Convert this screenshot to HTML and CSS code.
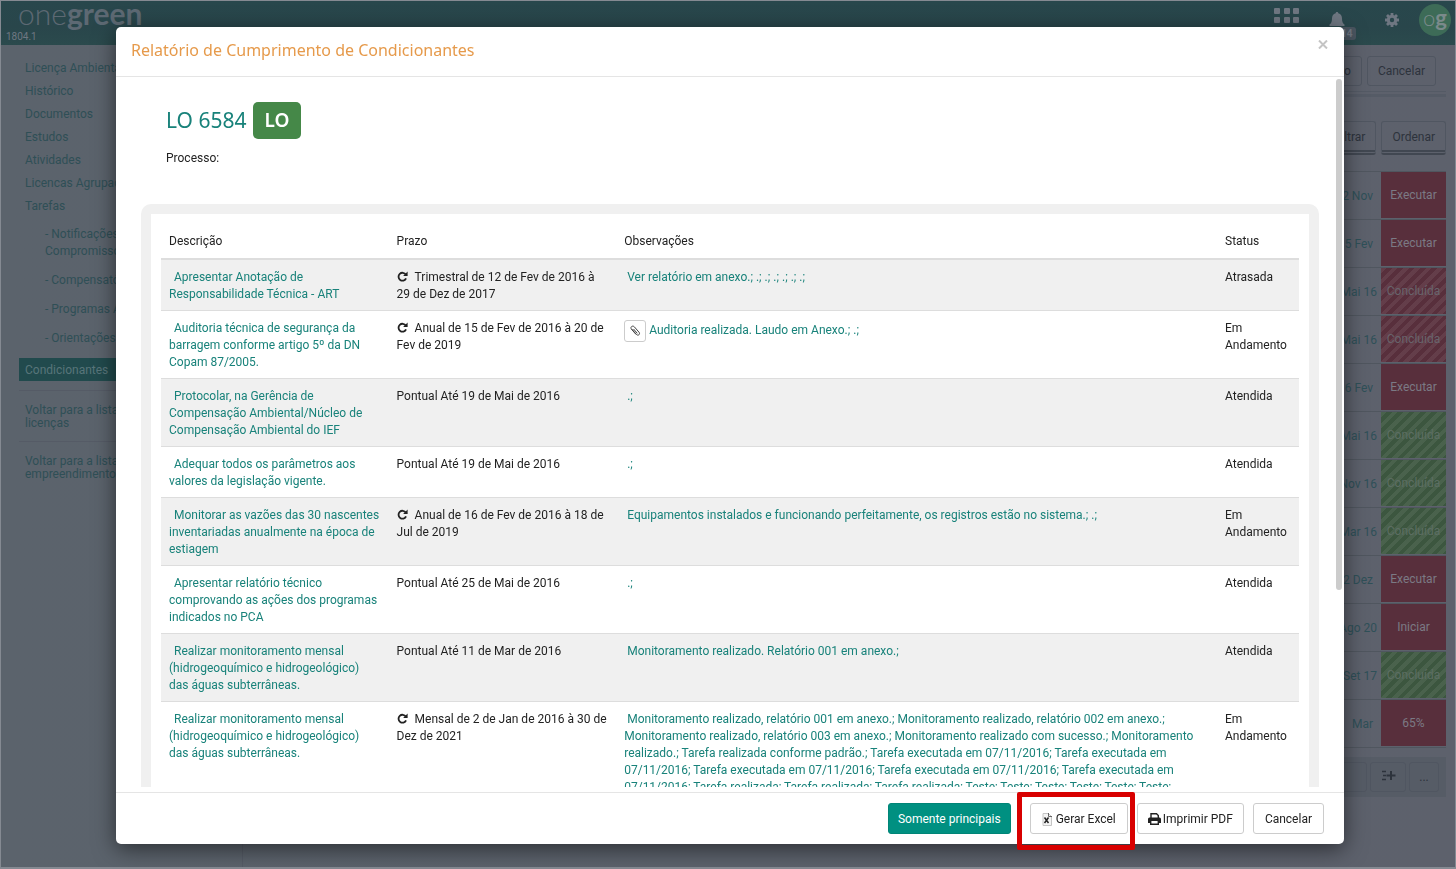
FILE: index.html
```html
<!DOCTYPE html>
<html lang="pt-BR">
<head>
<meta charset="utf-8">
<title>Onegreen - Condicionantes</title>
<link rel="stylesheet" href="styles.css">
</head>
<body>
<svg width="0" height="0" class="sprite" aria-hidden="true">
  <symbol id="repeat" viewBox="0 0 12 12"><path d="M9.6 3.9A4.3 4.3 0 1 0 9.9 8" fill="none" stroke="currentColor" stroke-width="2"/><path d="M11.6.6v4.900H6.700z" fill="currentColor"/></symbol>
</svg>
<div class="page">
  <header class="topbar">
    <div class="brand"><span class="logo"><span>one</span><b>green</b></span><span class="version">1804.1</span></div>
    <nav class="tools" aria-label="Ferramentas">
      <button class="tool apps" aria-label="Aplicativos"><svg width="26" height="26" viewBox="0 0 26 26" fill="currentColor"><rect width="6" height="6" rx="1"/><rect x="10" width="6" height="6" rx="1"/><rect x="19" width="6" height="6" rx="1"/><rect y="9" width="6" height="6" rx="1"/><rect x="10" y="9" width="6" height="6" rx="1"/><rect x="19" y="9" width="6" height="6" rx="1"/></svg></button>
      <button class="tool bell" aria-label="Notificações"><svg width="16" height="17" viewBox="0 0 16 17" fill="currentColor"><path d="M8 0c.8 0 1.300.5 1.300 1.300C12 2 13 4 13 6.500c0 3.500 1 5 2.500 6V14H.5v-1.500C2 11.500 3 10 3 6.500 3 4 4 2 6.700 1.300 6.700.5 7.200 0 8 0zM6 15h4a2 2 0 0 1-4 0z"/></svg><span class="count">14</span></button>
      <button class="tool gear" aria-label="Configurações"><svg width="14" height="14" viewBox="0 0 14 14"><circle cx="7" cy="7" r="3.700" fill="none" stroke="currentColor" stroke-width="3"/><path d="M7 0v3M7 11v3M0 7h3M11 7h3M2 2l2.200 2.200M9.800 9.800L12 12M12 2L9.800 4.200M4.200 9.800L2 12" stroke="currentColor" stroke-width="2.800"/></svg></button>
      <a class="avatar" href="#" aria-label="Perfil"><span>o</span><b>g</b></a>
    </nav>
  </header>
  <div class="columns">
    <nav class="sidebar" aria-label="Licença">
      <a href="#">Licença Ambiental</a>
      <a href="#">Histórico</a>
      <a href="#">Documentos</a>
      <a href="#">Estudos</a>
      <a href="#">Atividades</a>
      <a href="#">Licencas Agrupadas</a>
      <a href="#">Tarefas</a>
      <div class="sub">
        <a href="#">- Notificações e<br>Compromissos</a>
        <a href="#">- Compensatórias</a>
        <a href="#">- Programas Ambientais</a>
        <a href="#">- Orientações</a>
      </div>
      <a class="active" href="#">Condicionantes</a>
      <a class="back" href="#">Voltar para a lista de<br>licenças</a>
      <a class="back" href="#">Voltar para a lista de<br>empreendimentos</a>
    </nav>
    <main class="main">
      <div class="actions"><button class="ghost">Salvar e criar novo</button><button class="ghost">Cancelar</button></div>
      <div class="filters"><button class="ghost">Filtrar</button><button class="ghost">Ordenar</button></div>
      <ul class="tasks">
        <li><span class="date short">22 Nov</span><button class="state red">Executar</button></li>
        <li><span class="date short">15 Fev</span><button class="state red">Executar</button></li>
        <li><span class="date">19 Mai 16</span><button class="state red done">Concluída</button></li>
        <li><span class="date">19 Mai 16</span><button class="state red done">Concluída</button></li>
        <li><span class="date short">16 Fev</span><button class="state red">Executar</button></li>
        <li><span class="date">25 Mai 16</span><button class="state green done">Concluída</button></li>
        <li><span class="date">11 Nov 16</span><button class="state green done">Concluída</button></li>
        <li><span class="date">11 Mar 16</span><button class="state green done">Concluída</button></li>
        <li><span class="date short">2 Dez</span><button class="state red">Executar</button></li>
        <li><span class="date">1 Ago 20</span><button class="state red">Iniciar</button></li>
        <li><span class="date">1 Set 17</span><button class="state green done">Concluída</button></li>
        <li><span class="date short">Mar</span><button class="state red">65%</button></li>
      </ul>
      <div class="adder"><button class="ghost wide" aria-label="Nova tarefa"></button><button class="ghost list" aria-label="Adicionar à lista"><svg width="15" height="11" viewBox="0 0 15 11"><path d="M1 1.500h5M2 5.500h3M1 9.500h4" stroke="currentColor" stroke-width="1.500" stroke-dasharray="4 1"/><path d="M10 1v9M5.500 5.500h9" stroke="currentColor" stroke-width="2"/></svg></button><button class="ghost more">...</button></div>
    </main>
  </div>
</div>

<div class="overlay">
  <section class="modal" role="dialog" aria-modal="true" aria-labelledby="modal-title">
    <header class="modal-head"><h1 id="modal-title">Relatório de Cumprimento de Condicionantes</h1><button class="close" aria-label="Fechar"><svg width="10" height="9" viewBox="0 0 10 9"><path d="M1 .5l8 8M9 .5l-8 8" stroke="currentColor" stroke-width="2"/></svg></button></header>
    <div class="modal-body">
      <div class="scroll">
        <div class="license"><h2>LO 6584 <span class="badge">LO</span></h2><p>Processo:</p></div>
        <div class="panel">
          <table>
            <colgroup><col class="c-desc"><col class="c-term"><col class="c-obs"><col class="c-status"></colgroup>
            <thead><tr><th>Descrição</th><th>Prazo</th><th>Observações</th><th>Status</th></tr></thead>
            <tbody>
              <tr><td class="desc"><a href="#">Apresentar Anotação de<br>Responsabilidade Técnica - ART</a></td><td><svg class="repeat"><use href="#repeat"/></svg>Trimestral de 12 de Fev de 2016 à<br>29 de Dez de 2017</td><td class="obs"><a href="#">Ver relatório em anexo.; .; .; .; .; .; .;</a></td><td>Atrasada</td></tr>
              <tr><td class="desc"><a href="#">Auditoria técnica de segurança da<br>barragem conforme artigo 5º da DN<br>Copam 87/2005.</a></td><td><svg class="repeat"><use href="#repeat"/></svg>Anual de 15 de Fev de 2016 à 20 de<br>Fev de 2019</td><td><div class="attached"><button class="clip" aria-label="Anexo"><svg width="12" height="12" viewBox="0 0 12 12" fill="none" stroke="currentColor" stroke-linecap="round"><path d="M3.200 4.500l4.300 5c1.700 1.700 4-.3 2.600-2.200L5.300 1.800C3.600.1 1 1.900 2.300 4l4.500 5.200M4.800 4.300L8 8" stroke-width="1"/></svg></button><a href="#">Auditoria realizada. Laudo em Anexo.; .;</a></div></td><td>Em<br>Andamento</td></tr>
              <tr><td class="desc"><a href="#">Protocolar, na Gerência de<br>Compensação Ambiental/Núcleo de<br>Compensação Ambiental do IEF</a></td><td>Pontual Até 19 de Mai de 2016</td><td class="obs"><a href="#">.;</a></td><td>Atendida</td></tr>
              <tr><td class="desc"><a href="#">Adequar todos os parâmetros aos<br>valores da legislação vigente.</a></td><td>Pontual Até 19 de Mai de 2016</td><td class="obs"><a href="#">.;</a></td><td>Atendida</td></tr>
              <tr><td class="desc"><a href="#">Monitorar as vazões das 30 nascentes<br>inventariadas anualmente na época de<br>estiagem</a></td><td><svg class="repeat"><use href="#repeat"/></svg>Anual de 16 de Fev de 2016 à 18 de<br>Jul de 2019</td><td class="obs"><a href="#">Equipamentos instalados e funcionando perfeitamente, os registros estão no sistema.; .;</a></td><td>Em<br>Andamento</td></tr>
              <tr><td class="desc"><a href="#">Apresentar relatório técnico<br>comprovando as ações dos programas<br>indicados no PCA</a></td><td>Pontual Até 25 de Mai de 2016</td><td class="obs"><a href="#">.;</a></td><td>Atendida</td></tr>
              <tr><td class="desc"><a href="#">Realizar monitoramento mensal<br>(hidrogeoquímico e hidrogeológico)<br>das águas subterrâneas.</a></td><td>Pontual Até 11 de Mar de 2016</td><td class="obs"><a href="#">Monitoramento realizado. Relatório 001 em anexo.;</a></td><td>Atendida</td></tr>
              <tr><td class="desc"><a href="#">Realizar monitoramento mensal<br>(hidrogeoquímico e hidrogeológico)<br>das águas subterrâneas.</a></td><td><svg class="repeat"><use href="#repeat"/></svg>Mensal de 2 de Jan de 2016 à 30 de<br>Dez de 2021</td><td class="obs"><a href="#">Monitoramento realizado, relatório 001 em anexo.; Monitoramento realizado, relatório 002 em anexo.;<br>Monitoramento realizado, relatório 003 em anexo.; Monitoramento realizado com sucesso.; Monitoramento<br>realizado.; Tarefa realizada conforme padrão.; Tarefa executada em 07/11/2016; Tarefa executada em<br>07/11/2016; Tarefa executada em 07/11/2016; Tarefa executada em 07/11/2016; Tarefa executada em<br>07/11/2016; Tarefa realizada; Tarefa realizada; Tarefa realizada; Teste; Teste; Teste; Teste; Teste; Teste;</a></td><td>Em<br>Andamento</td></tr>
            </tbody>
          </table>
        </div>
      </div>
      <div class="thumb"></div>
    </div>
    <footer class="modal-foot">
      <button class="btn primary">Somente principais</button>
      <span class="highlight"><button class="btn excel"><svg width="10" height="13" viewBox="0 0 10 13"><path d="M1 .5h5.500l3 3v9H1z" fill="#f4f4f4" stroke="#c4c4c4"/><path d="M6.500 0v3.500H10" fill="none" stroke="#666"/><path d="M2.500 4.500l4 5.500M6.500 4.500l-4 5.500" stroke="#222" stroke-width="1.500"/></svg>Gerar Excel</button></span>
      <button class="btn print"><svg width="13" height="12" viewBox="0 0 13 12" fill="currentColor"><path d="M3 5V.7h5.500L10.300 2.500V5" fill="none" stroke="currentColor" stroke-width="1.400"/><path d="M1.500 4.500h10A1.500 1.500 0 0 1 13 6v4h-2V8H2v2H0V6a1.500 1.500 0 0 1 1.500-1.500z"/><path d="M2.700 8v3.300h7.600V8" fill="none" stroke="currentColor" stroke-width="1.400"/></svg>Imprimir PDF</button>
      <button class="btn">Cancelar</button>
    </footer>
  </section>
</div>
</body>
</html>
```

FILE: styles.css
```css
* { box-sizing: border-box; }
html, body { margin: 0; height: 100%; }
body { font: 12px/17px Roboto, "Open Sans", sans-serif; color: #222; overflow: hidden; }
button { font: inherit; color: inherit; cursor: pointer; }
a { color: #18827a; text-decoration: none; }
.sprite { position: absolute; }

/* Page behind the dialog */
.page { display: flex; flex-direction: column; height: 100vh; overflow: hidden; border: 1px solid #858a92; border-bottom-width: 2px; background: linear-gradient(90deg, #5b636c, #5d616c); }
.topbar { display: flex; justify-content: space-between; flex: none; height: 44px; background: linear-gradient(#28474c, #29464b 60%, #2b4a4d); color: #6f7782; }
.brand { display: flex; flex-direction: column; padding-left: 5px; }
.logo { height: 31px; padding-left: 12px; font: 300 30px/24px Lato, sans-serif; color: #5d6973; }
.logo b { font-weight: 700; }
.version { font-size: 10px; line-height: 16px; }
.tools { display: flex; align-items: flex-start; padding: 3px 4px 0 0; }
.tool { position: relative; border: 0; padding: 0; background: none; line-height: 0; }
.apps { margin: 4px 29px 0 0; }
.bell { margin: 8px 40px 0 0; }
.gear { margin: 9px 20px 0 0; }
.count { position: absolute; left: 8px; top: 15px; padding: 0 4px; border-radius: 3px; background: #4a5560; font: bold 10px/13px "Open Sans", sans-serif; }
.avatar { width: 32px; height: 32px; border-radius: 50%; background: #3d6b57; color: #7b8a8b; font: 300 22px/28px Lato, sans-serif; text-align: center; }
.avatar b { font-weight: 700; }
.columns { display: flex; flex: 1; min-height: 0; }
.sidebar { display: flex; flex-direction: column; flex: none; width: 242px; padding: 11px 0 0 18px; border-right: 1px solid #555b66; }
.sidebar a { padding: 4px 6px 2px; color: #2f4f56; white-space: nowrap; }
.sub { display: flex; flex-direction: column; gap: 12px; padding: 9px 0 11px 20px; }
.sidebar .sub a { padding: 0 6px; }
.sidebar .active { background: #214a4d; color: #58757a; }
.sidebar .back { margin-top: 9px; padding: 13px 6px 6px; border-top: 1px solid #555b66; line-height: 13px; }
.sidebar .back + .back { margin-top: 5px; }
.main { flex: 1; padding: 11px 9px 0 12px; }
.actions, .filters, .adder { display: flex; justify-content: flex-end; gap: 5px; }
.actions { padding: 0 10px 5px 0; border-bottom: 1px solid #545a65; }
.filters { margin-top: 2px; padding-top: 24px; border-top: 3px solid #555b66; }
.ghost { height: 30px; padding: 1px 10px 0; border: 1px solid #505661; border-radius: 3px; background: none; color: #2d333c; }
.filters .ghost { height: 34px; padding-top: 2px; border-bottom: 5px double #414751; }
.tasks { margin: 16px 0 9px; padding: 0; list-style: none; border-top: 1px solid #50565f; }
.tasks li { display: flex; justify-content: flex-end; height: 48px; border-bottom: 1px solid #50565f; }
.date { padding: 16px 4px 0 0; color: #2f5058; }
.date.short { padding-right: 8px; }
.state { width: 65px; height: 46px; border: 0; padding: 0; color: #7b7a84; }
.red { background-color: #582f3c; }
.green { background-color: #3c563f; }
.done { color: #68646c; background-image: repeating-linear-gradient(135deg, #ffffff12 0 4px, transparent 4px 8px); }
.green.done { color: #5c6e63; }
.adder { gap: 3px; padding: 5px 7px; background: #565c66; }
.wide { width: 160px; }
.list { width: 36px; }
.more { width: 30px; padding: 0; }

/* Dialog */
.overlay { position: fixed; inset: 0; display: flex; padding: 27px 112px 25px 116px; }
.modal { display: flex; flex: 1; flex-direction: column; min-width: 0; border-radius: 5px; background: #fff; box-shadow: 0 5px 22px #0008; }
.modal-head { display: flex; justify-content: space-between; align-items: flex-start; padding: 11px 16px 14px 15px; border-bottom: 1px solid #e5e5e5; }
h1 { margin: 0; font-family: "Noto Sans", sans-serif; font-size: 16px; font-weight: 400; line-height: 24px; color: #e69a4b; }
.close { border: 0; padding: 2px 0 0; background: none; color: #c4c4c4; line-height: 0; }
.modal-body { position: relative; flex: 1; min-height: 0; margin-bottom: 5px; }
.scroll { height: 100%; padding: 25px; overflow: hidden; }
.thumb { position: absolute; top: 2px; right: 2px; width: 6px; height: 72%; border-radius: 3px; background: #ccc; }
.license { padding: 0 25px 37px; }
h2 { display: flex; align-items: center; gap: 6px; margin: 0; font-family: "Noto Sans", sans-serif; font-size: 21px; font-weight: 400; line-height: 37px; color: #18827a; }
.badge { padding: 0 12px; border-radius: 5px; background: #458848; color: #fff; font-size: 19px; font-weight: 600; }
.license p { margin: 11px 0 0; }
.panel { padding: 10px; border: 10px solid #f0f0f0; border-radius: 10px; }
table { width: 100%; border-collapse: separate; border-spacing: 0; table-layout: fixed; }
.c-desc, .c-term { width: 20%; }
.c-status { width: 82px; }
th, td { padding: 9px 8px 8px; text-align: left; vertical-align: top; font-weight: 400; white-space: nowrap; }
th { border-bottom: 2px solid #ddd; }
td { padding-bottom: 7px; border-bottom: 1px solid #ddd; }
tbody tr:nth-child(odd) { background: #f0f0f0; }
.desc { text-indent: 5px; }
.desc a { display: block; }
.obs { text-indent: 3px; }
.repeat { width: 11px; height: 11px; margin-right: 7px; vertical-align: -1px; }
.attached { display: flex; align-items: flex-start; gap: 3px; }
.clip { display: grid; place-items: center; width: 22px; height: 22px; padding: 0; border: 1px solid #ccc; border-radius: 3px; background: #fff; color: #444; }
.attached a { padding-top: 2px; }
.modal-foot { display: flex; justify-content: flex-end; align-items: center; gap: 9px; flex: none; padding: 10px 20px; border-top: 1px solid #e5e5e5; }
.btn { display: flex; align-items: center; gap: 4px; height: 31px; padding: 1px 11px 0; border: 1px solid #ccc; border-radius: 3px; background: #fff; }
.print { gap: 2px; padding: 1px 10px 0; }
.primary { padding: 1px 9px 0; border-color: #008577; background: #009081; color: #fff; }
.highlight { position: relative; margin-left: 10px; }
.highlight::after { content: ""; position: absolute; inset: -11px -7px -16px -13px; border: 5px solid #d80000; border-radius: 2px; pointer-events: none; }
```
